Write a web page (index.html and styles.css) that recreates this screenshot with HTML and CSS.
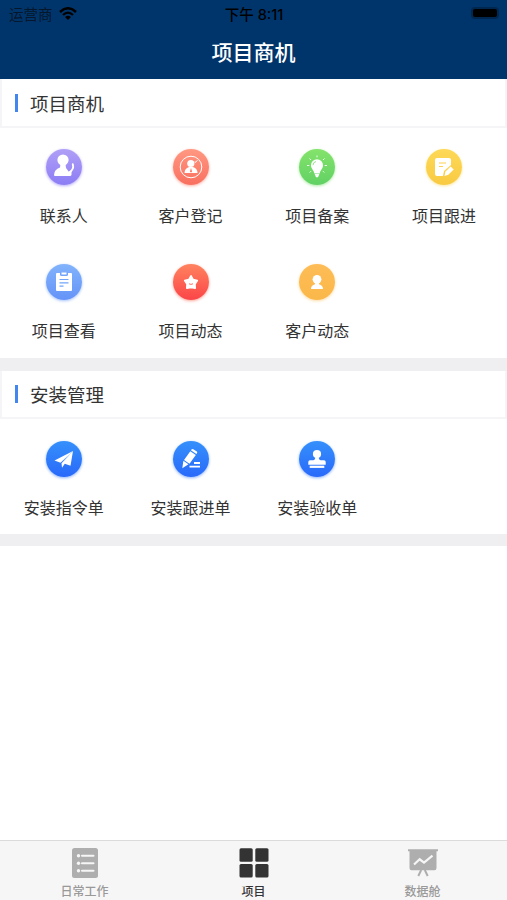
FILE: index.html
```html
<!DOCTYPE html>
<html lang="zh-CN">
<head>
  <meta charset="UTF-8" />
  <meta name="viewport" content="width=device-width, initial-scale=1.0"/>
  <title>项目商机</title>
  <link rel="stylesheet" href="styles.css">
</head>
<body>
  <header>
    <div class="status-bar">
      <div class="carrier">
        <span>运营商</span>
        <svg width="18" height="13" viewBox="0 0 18 13">
          <path d="M1 5 Q9 -2.4 17 5" fill="none" stroke="#000" stroke-width="2.5"/>
          <path d="M4 8 Q9 3.2 14 8" fill="none" stroke="#000" stroke-width="2.3"/>
          <path d="M9 13 L6 10 Q9 7.6 12 10 Z"/>
        </svg>
      </div>
      <div class="time">下午 8:11</div>
      <div class="battery"><div class="battery-level"></div></div>
    </div>
    <h1>项目商机</h1>
  </header>

  <main>
    <section>
      <h2>项目商机</h2>
      <div class="menu-grid">
        <a class="menu-item">
          <div class="icon purple">
            <svg viewBox="0 0 36 36" fill="#fff">
              <circle cx="17" cy="11" r="5.6"/>
              <path d="M8 26 Q8 20.5 14 18.5 L14.5 15 H19.5 L20 19 L23 23 L25.5 21 V26 Q25 27 24 27 H9 Q8 27 8 26 Z"/>
              <path d="M26.8 15.2 Q28.5 20.5 22.5 24" fill="none" stroke="#fff" stroke-width="1.9" stroke-linecap="round"/>
            </svg>
          </div>
          <span>联系人</span>
        </a>
        <a class="menu-item">
          <div class="icon coral">
            <svg viewBox="0 0 36 36" fill="#fff">
              <circle cx="18" cy="18" r="10.8" fill="none" stroke="#fff" stroke-width="1"/>
              <circle cx="17.8" cy="14.5" r="3.6"/>
              <path d="M11.5 24 Q11.5 19.5 16 18 H20 Q24.5 19.5 24.5 24 Z"/>
              <path d="M18 19 L19 22.3 L18 23.8 L17 22.3 Z" fill="#fb806c"/>
              <path d="M21 12.5 L22 13.5 L24.5 11.5" fill="none" stroke="#fff" stroke-width="1"/>
            </svg>
          </div>
          <span>客户登记</span>
        </a>
        <a class="menu-item">
          <div class="icon green">
            <svg viewBox="0 0 36 36" fill="#fff">
              <path d="M18 10.2 A6 6 0 0 1 24 16.3 C24 20 21 21.2 20.8 24.5 H15.3 C15 21.2 12 20 12 16.3 A6 6 0 0 1 18 10.2 Z"/>
              <path d="M15.7 25 H20.4 L19 28.3 H17 Z"/>
              <path d="M18 6.5 V8.3 M10.5 9.5 L12 11 M25.5 9.5 L24 11 M8 16.5 H10.3 M25.7 16.5 H28 M10.7 23.5 L12 22.2 M25.3 23.5 L24 22.2" stroke="#fff" stroke-width=".9"/>
              <path d="M14 16.2 Q14.3 13 17 12.5" fill="none" stroke="#70d762" stroke-width=".7"/>
            </svg>
          </div>
          <span>项目备案</span>
        </a>
        <a class="menu-item">
          <div class="icon yellow">
            <svg viewBox="0 0 36 36" fill="#fff">
              <path d="M11 9 H23 Q25 9 25 11 V16 L18 22 L17 27 H11 Q9 27 9 25 V11 Q9 9 11 9 Z"/>
              <path d="M18.5 27 L19.3 22.8 L24.7 17.4 L27.7 20.4 L22.3 25.8 Z"/>
              <path d="M13 14 H20 M13 17.5 H17" stroke="#fbd34c" stroke-width="1.1"/>
            </svg>
          </div>
          <span>项目跟进</span>
        </a>
        <a class="menu-item">
          <div class="icon sky">
            <svg viewBox="0 0 36 36" fill="#fff">
              <rect x="10" y="9" width="16" height="18" rx="1"/>
              <path d="M14 8.5 H22 V10.5 Q22 12 20.5 12 H15.5 Q14 12 14 10.5 Z" fill="#72a5fa"/>
              <path d="M15.5 8.5 H20.5 V10.5 H15.5 Z"/>
              <path d="M13.5 15.5 H22.5 M13.5 18.8 H22.5 M13.5 22.1 H17.5" stroke="#72a5fa" stroke-width="1.2"/>
            </svg>
          </div>
          <span>项目查看</span>
        </a>
        <a class="menu-item">
          <div class="icon red">
            <svg viewBox="0 0 36 36" fill="#fff">
              <path d="M18 11.8 L20.2 15.6 L24.3 16.5 L22 20 L22.2 24.2 L18 23.4 L13.8 24.2 L14 20 L11.7 16.5 L15.8 15.6 Z" stroke="#fff" stroke-width="1.6" stroke-linejoin="round"/>
              <path d="M16 19.8 Q18 21 20 19.8" fill="none" stroke="#fc5e4f" stroke-width=".9"/>
            </svg>
          </div>
          <span>项目动态</span>
        </a>
        <a class="menu-item">
          <div class="icon orange">
            <svg viewBox="0 0 36 36" fill="#fff">
              <circle cx="18" cy="15.3" r="4.4"/>
              <path d="M12 25 Q12 21.5 16 20.3 V18 H20 V20.3 Q24 21.5 24 25 Z"/>
            </svg>
          </div>
          <span>客户动态</span>
        </a>
      </div>
    </section>

    <section>
      <h2>安装管理</h2>
      <div class="menu-grid">
        <a class="menu-item">
          <div class="icon blue">
            <svg viewBox="0 0 36 36" fill="#fff">
              <path d="M27 10 L8.5 19.5 L14.5 21.7 Z"/>
              <path d="M27 10 L24.5 24.8 L18.8 22.7 L16 26.7 L15.5 22.2 L24 13.5 L14.5 21.7 Z"/>
            </svg>
          </div>
          <span>安装指令单</span>
        </a>
        <a class="menu-item">
          <div class="icon blue">
            <svg viewBox="0 0 36 36" fill="#fff">
              <path d="M18.5 8.5 Q19.3 7.5 20.3 8.2 L23.8 10.6 Q24.6 11.3 24 12.2 L23.4 13.1 L17.9 9.3 Z"/>
              <path d="M17.3 10.2 L22.8 14 L16.5 22.8 L11 19 Z"/>
              <path d="M10.4 19.8 L15.4 23.3 L9.3 27.2 Z"/>
              <path d="M21 22 H27 M16.5 25.7 H27" stroke="#fff" stroke-width="1.8"/>
            </svg>
          </div>
          <span>安装跟进单</span>
        </a>
        <a class="menu-item">
          <div class="icon blue">
            <svg viewBox="0 0 36 36" fill="#fff">
              <circle cx="18" cy="13" r="4.1"/>
              <path d="M16.3 15 H19.7 V17 Q20 19 21.5 19.3 H25 Q26.7 19.3 26.7 21 V23.8 H9.3 V21 Q9.3 19.3 11 19.3 H14.5 Q16 19 16.3 17 Z"/>
              <rect x="10.7" y="24.7" width="14.6" height="2.2"/>
            </svg>
          </div>
          <span>安装验收单</span>
        </a>
      </div>
    </section>
  </main>

  <nav class="tab-bar">
    <a class="tab">
      <svg width="30" height="30" viewBox="0 0 30 30">
        <rect x="2" width="26" height="30" rx="2.5" fill="#aeaeae"/>
        <path d="M12 7.7 H23.5 M12 15.2 H23.5 M12 22.8 H23.5" stroke="#f7f6f7" stroke-width="2" stroke-linecap="round"/>
        <g fill="#f7f6f7">
          <circle cx="8.5" cy="7.7" r="1.7"/>
          <circle cx="8.5" cy="15.2" r="1.7"/>
          <circle cx="8.5" cy="22.8" r="1.7"/>
        </g>
      </svg>
      <span>日常工作</span>
    </a>
    <a class="tab active">
      <svg width="30" height="30" viewBox="0 0 30 30" fill="#333">
        <rect x=".5" y=".3" width="13.2" height="13.5" rx="1.5"/>
        <rect x="16.3" y=".3" width="13.2" height="13.5" rx="1.5"/>
        <rect x=".5" y="16.1" width="13.2" height="13.5" rx="1.5"/>
        <rect x="16.3" y="16.1" width="13.2" height="13.5" rx="1.5"/>
      </svg>
      <span>项目</span>
    </a>
    <a class="tab">
      <svg width="32" height="30" viewBox="0 0 32 30">
        <path d="M1 1.3 H31 V3.2 H29.5 V20 Q29.5 22.3 27.5 22.3 H4.5 Q2.5 22.3 2.5 20 V3.2 H1 Z" fill="#aeaeae"/>
        <path d="M14.2 22 L11.3 28 M17.8 22 L20.7 28" stroke="#aeaeae" stroke-width="2"/>
        <path d="M7 16.5 L12.7 11.3 L17 14.7 L25.5 7.7" fill="none" stroke="#f7f6f7" stroke-width="2.2"/>
      </svg>
      <span>数据舱</span>
    </a>
  </nav>
</body>
</html>
```
FILE: styles.css
```css
* {
  box-sizing: border-box;
}

body {
  margin: 0;
  height: 900px;
  display: flex;
  flex-direction: column;
  background: #fff;
  color: #333;
  font-family: "Inter", "Noto Sans CJK SC", sans-serif;
}

header {
  height: 79px;
  background-color: #00356c;
}

.status-bar {
  display: grid;
  grid-template-columns: 1fr auto 1fr;
  align-items: center;
  height: 26px;
  padding: 0 8px 0 9px;
  color: #000;
  font-size: 14.5px;
}

.carrier {
  display: flex;
  align-items: center;
  gap: 6px;
  color: #06172b;
}

.time {
  font-weight: 500;
  font-size: 14.5px;
}

.battery {
  justify-self: end;
  width: 28px;
  height: 12px;
  padding: 2px;
  border-radius: 4px;
  background: #002750;
}

.battery-level {
  height: 8px;
  border-radius: 2px;
  background: #000;
}

h1 {
  margin: 0;
  padding-top: 3px;
  color: #fff;
  font-size: 21px;
  font-weight: 500;
  line-height: 48px;
  text-align: center;
}

main {
  flex: 1;
}

section {
  border-bottom: 13px solid #efeff2;
}

section:last-child {
  border-bottom-width: 12px;
}

h2 {
  display: flex;
  align-items: center;
  height: 48.5px;
  margin: 0;
  padding: 1px 0 0 13px;
  border: solid #f5f5f7;
  border-width: 0 2px 2px;
  font-size: 18.5px;
  font-weight: 400;
}

h2::before {
  content: "";
  width: 3px;
  height: 18px;
  margin-right: 12px;
  background: #4286ee;
}

.menu-grid {
  display: grid;
  grid-template-columns: repeat(4, 1fr);
  grid-auto-rows: 115.1px;
}

.menu-item {
  display: flex;
  flex-direction: column;
  align-items: center;
  padding: 21.4px 0 0 1px;
  font-size: 16px;
  line-height: 24px;
}

.icon {
  width: 36px;
  height: 36px;
  margin-bottom: 19px;
  border-radius: 50%;
}

.icon svg {
  display: block;
}

.purple {
  background: linear-gradient(#b09ff6, #8c7df5);
  box-shadow: 0 1px 3px #b6acf8;
}

.coral {
  background: linear-gradient(#ff9882, #f9705f);
  box-shadow: 0 1px 3px #fcb1a4;
}

.green {
  background: linear-gradient(#84e36b, #61d164);
  box-shadow: 0 1px 3px #aceba2;
}

.yellow {
  background: linear-gradient(#fdd957, #f9ca42);
  box-shadow: 0 1px 3px #fce7a0;
}

.sky {
  background: linear-gradient(#82b3fb, #6593f8);
  box-shadow: 0 1px 3px #a5c3fc;
}

.red {
  background: linear-gradient(#ff835f, #fb4548);
  box-shadow: 0 1px 3px #fda498;
}

.orange {
  background: linear-gradient(#fdbc56, #fbb849);
  box-shadow: 0 1px 3px #fddba3;
}

.blue {
  background: linear-gradient(#3590fb, #2969fa);
  box-shadow: 0 1px 3px #8db3fb;
}

.tab-bar {
  display: grid;
  grid-template-columns: repeat(3, 1fr);
  height: 60px;
  border-top: 1px solid #dcdbdc;
  background: #f7f6f7;
}

.tab {
  display: flex;
  flex-direction: column;
  align-items: center;
  padding-top: 7px;
  color: #999;
  font-size: 12px;
  font-weight: 500;
  line-height: 18px;
}

.tab span {
  margin-top: 5px;
}

.tab.active {
  color: #333;
}
```
